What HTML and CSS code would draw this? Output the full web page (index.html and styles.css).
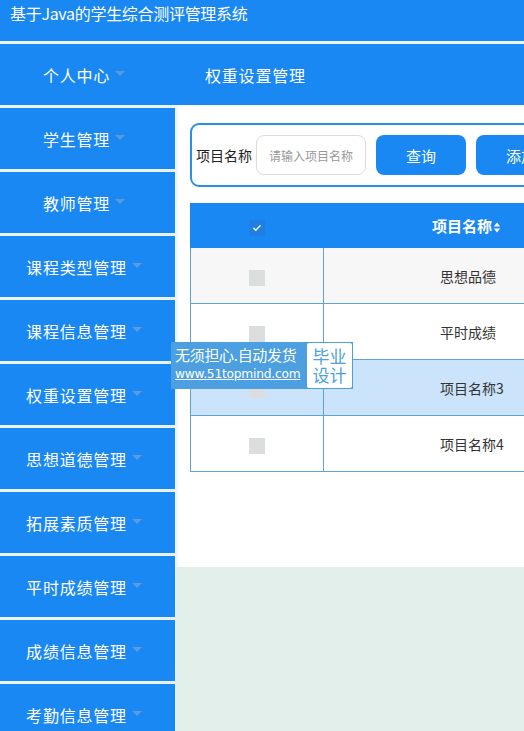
FILE: index.html
```html
<!DOCTYPE html>
<html lang="zh-CN">
<head>
    <meta charset="UTF-8">
    <title>权重设置管理</title>
    <link rel="stylesheet" href="styles.css">
</head>
<body>
    <!-- Top bar -->
    <div class="topbar">基于Java的学生综合测评管理系统</div>

    <div class="layout">
        <!-- Sidebar -->
        <ul class="sidebar">
            <li class="nav-item">个人中心<span class="caret"></span></li>
            <li class="nav-item">学生管理<span class="caret"></span></li>
            <li class="nav-item">教师管理<span class="caret"></span></li>
            <li class="nav-item">课程类型管理<span class="caret"></span></li>
            <li class="nav-item">课程信息管理<span class="caret"></span></li>
            <li class="nav-item">权重设置管理<span class="caret"></span></li>
            <li class="nav-item">思想道德管理<span class="caret"></span></li>
            <li class="nav-item">拓展素质管理<span class="caret"></span></li>
            <li class="nav-item">平时成绩管理<span class="caret"></span></li>
            <li class="nav-item">成绩信息管理<span class="caret"></span></li>
            <li class="nav-item">考勤信息管理<span class="caret"></span></li>
        </ul>

        <!-- Main -->
        <div class="main">
            <div class="breadcrumb">权重设置管理</div>

            <div class="panel">
                <div class="search-box">
                    <span class="search-label">项目名称</span>
                    <input type="text" class="search-input" placeholder="请输入项目名称">
                    <button class="btn">查询</button>
                    <button class="btn">添加</button>
                    <button class="btn">删除</button>
                </div>

                <table class="data-table">
                    <thead>
                        <tr>
                            <th class="col-check"><span class="check checked">
                                <svg viewBox="0 0 16 16" width="10" height="10"><path d="M3 8.5l3 3 7-7" fill="none" stroke="#fff" stroke-width="2.4" stroke-linecap="round" stroke-linejoin="round"/></svg>
                            </span></th>
                            <th>项目名称<span class="sort">
                                <svg viewBox="0 0 8 12" width="8" height="11"><path d="M4 0.5L7.5 5H0.5z M4 11.5L0.5 7H7.5z" fill="#fff"/></svg>
                            </span></th>
                        </tr>
                    </thead>
                    <tbody>
                        <tr class="row-grey">
                            <td class="col-check"><span class="check"></span></td>
                            <td>思想品德</td>
                        </tr>
                        <tr>
                            <td class="col-check"><span class="check"></span></td>
                            <td>平时成绩</td>
                        </tr>
                        <tr class="row-hover">
                            <td class="col-check"><span class="check"></span></td>
                            <td>项目名称3</td>
                        </tr>
                        <tr>
                            <td class="col-check"><span class="check"></span></td>
                            <td>项目名称4</td>
                        </tr>
                    </tbody>
                </table>
            </div>
        </div>
    </div>

    <!-- Watermark badge -->
    <div class="badge">
        <div class="badge-left">
            <div class="badge-line">无须担心.自动发货</div>
            <div class="badge-link">www.51topmind.com</div>
        </div>
        <div class="badge-right">毕业<br>设计</div>
    </div>
</body>
</html>
```

FILE: styles.css
```css
* {
    margin: 0;
    padding: 0;
    box-sizing: border-box;
}

body {
    font-family: "Noto Sans CJK SC", "Noto Sans", sans-serif;
    background-color: #e8f4fc;
    width: 524px;
    height: 731px;
    overflow: hidden;
    position: relative;
}

.topbar {
    height: 41px;
    background-color: #1a88f3;
    color: #fff;
    font-size: 16px;
    line-height: 26px;
    padding-left: 10px;
    margin-bottom: 3px;
    letter-spacing: -0.3px;
}

.layout {
    display: flex;
}

.sidebar {
    list-style: none;
    width: 175px;
    flex-shrink: 0;
}

.nav-item {
    height: 61px;
    margin-bottom: 3px;
    background-color: #1a88f3;
    color: #fff;
    font-size: 16px;
    letter-spacing: 0.8px;
    display: flex;
    align-items: center;
    justify-content: center;
    padding-right: 7px;
}

.caret {
    display: inline-block;
    width: 0;
    height: 0;
    margin-left: 5px;
    margin-top: -3px;
    border-left: 5px solid transparent;
    border-right: 5px solid transparent;
    border-top: 5px solid #5b9ade;
}

.main {
    flex: 1;
    background-color: #e3efea;
    min-width: 0;
    height: 687px;
}

.breadcrumb {
    height: 61px;
    background-color: #1a88f3;
    color: #fff;
    font-size: 16px;
    letter-spacing: 0.8px;
    display: flex;
    align-items: center;
    padding-left: 30px;
}

.panel {
    background-color: #fff;
    height: 462px;
    padding: 18px 0 0 15px;
    border-left: 3px solid #eef6fd;
    width: 700px;
}

.search-box {
    display: flex;
    align-items: center;
    gap: 10px;
    height: 64px;
    border: 2px solid #2b8ee9;
    border-radius: 9px;
    padding-left: 4px;
    margin-left: -3px;
    width: 560px;
}

.search-label {
    font-size: 14px;
    color: #222;
    margin-right: -6px;
}

.search-input {
    width: 110px;
    height: 40px;
    border: 1px solid #dcdcdc;
    border-radius: 8px;
    padding: 0 12px;
    font-family: inherit;
    font-size: 12px;
    outline: none;
}

.search-input::placeholder {
    color: #999;
}

.btn {
    width: 90px;
    height: 40px;
    border: none;
    border-radius: 8px;
    background-color: #1a88f3;
    color: #fff;
    font-family: inherit;
    font-size: 15px;
}

.data-table {
    margin-top: 16px;
    margin-left: -3px;
    border-collapse: collapse;
    width: 560px;
}

.data-table th {
    height: 44px;
    background-color: #1a88f3;
    color: #fff;
    font-size: 15px;
    font-weight: bold;
    border: 1px solid #1a88f3;
    text-align: center;
}

.data-table td {
    height: 56px;
    border: 1px solid #5fa2d6;
    font-size: 14px;
    color: #333;
    text-align: left;
    padding-left: 116px;
}

.data-table th:nth-child(2) {
    text-align: left;
    padding-left: 108px;
}

.data-table .col-check {
    width: 133px;
    text-align: center;
    padding-left: 0;
}

.row-grey td {
    background-color: #f7f7f7;
}

.row-hover td {
    background-color: #cce4fb;
}

.check {
    display: inline-block;
    width: 16px;
    height: 16px;
    background-color: #dcdddd;
    vertical-align: middle;
}

.check.checked {
    background-color: #1f7fe3;
    display: inline-flex;
    align-items: center;
    justify-content: center;
}

.sort {
    display: inline-block;
    margin-left: 1px;
    vertical-align: -1px;
}

.badge {
    position: absolute;
    left: 171px;
    top: 342px;
    height: 47px;
    display: flex;
    background-color: #4c9fe0;
    padding: 1px;
}

.badge-left {
    width: 135px;
    color: #fff;
    padding: 2px 0 0 3px;
}

.badge-line {
    font-size: 15px;
    line-height: 20px;
    letter-spacing: -0.3px;
}

.badge-link {
    font-family: "DejaVu Sans", sans-serif;
    font-size: 12.2px;
    line-height: 19px;
    text-decoration: underline;
    letter-spacing: -0.2px;
}

.badge-right {
    width: 45px;
    background-color: #fff;
    color: #4c9fe0;
    font-size: 17px;
    line-height: 19px;
    text-align: center;
    padding-top: 3px;
    border-radius: 2px;
}
```
